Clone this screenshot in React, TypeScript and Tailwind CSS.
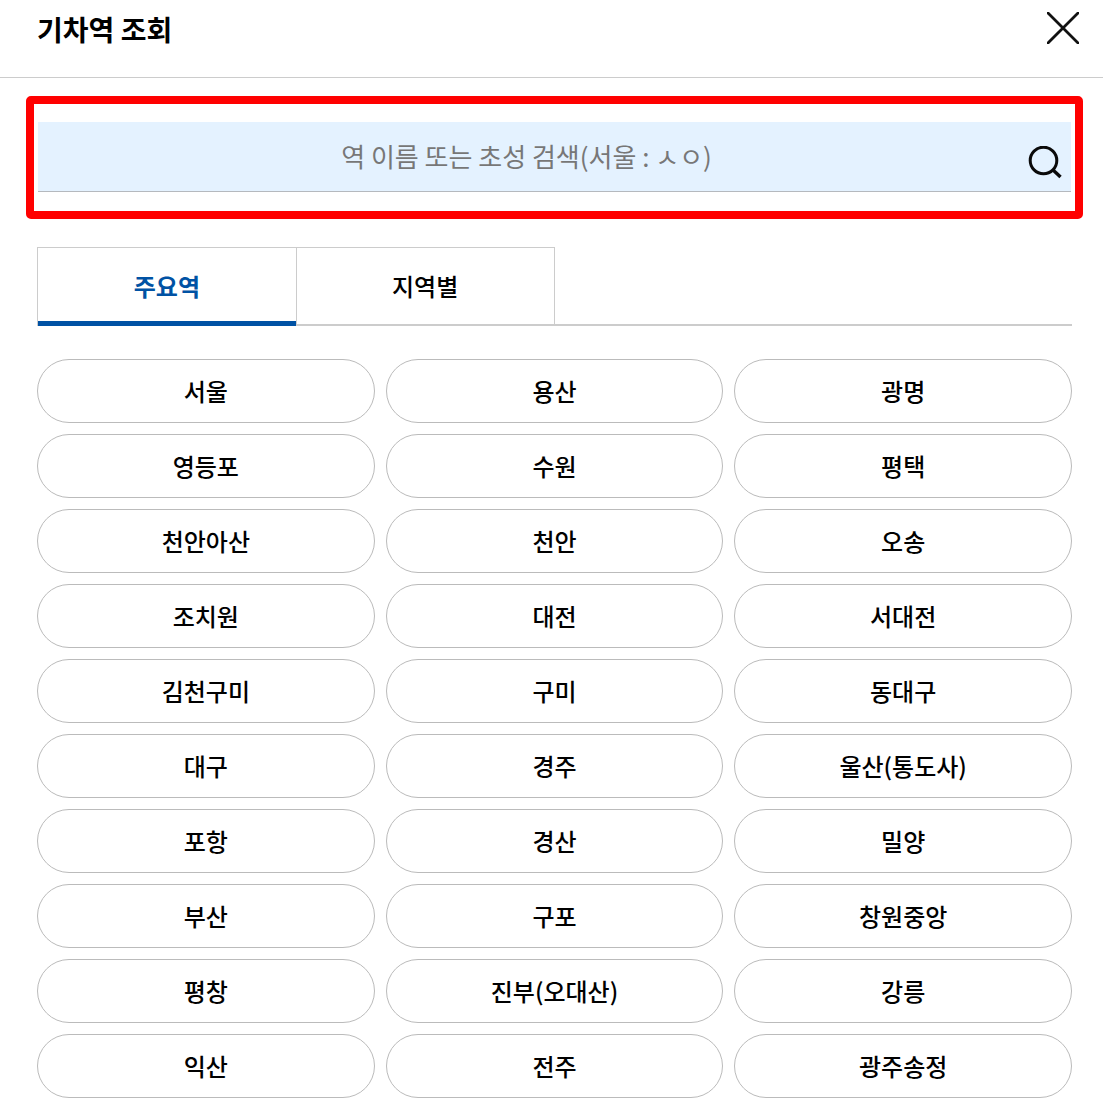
import { useState } from "react";

type Tab = "main" | "region";

const TABS: { id: Tab; label: string }[] = [
  { id: "main", label: "주요역" },
  { id: "region", label: "지역별" },
];

const STATIONS = [
  "서울", "용산", "광명",
  "영등포", "수원", "평택",
  "천안아산", "천안", "오송",
  "조치원", "대전", "서대전",
  "김천구미", "구미", "동대구",
  "대구", "경주", "울산(통도사)",
  "포항", "경산", "밀양",
  "부산", "구포", "창원중앙",
  "평창", "진부(오대산)", "강릉",
  "익산", "전주", "광주송정",
];

const CloseIcon = () => (
  <svg width="32" height="32" viewBox="0 0 32 32" fill="none" stroke="#111" strokeWidth="2.8" aria-hidden="true">
    <path d="M0 0L32 32M32 0L0 32" />
  </svg>
);

const SearchIcon = () => (
  <svg width="34" height="34" viewBox="0 0 34 34" fill="none" stroke="#0a0a0a" strokeWidth="3" aria-hidden="true">
    <circle cx="15.5" cy="14.5" r="13.3" />
    <path d="M24.5 23.5L32.5 31" strokeWidth="3.4" />
  </svg>
);

const App = () => {
  const [tab, setTab] = useState<Tab>("main");
  const [keyword, setKeyword] = useState("");

  return (
    <div className="min-h-screen bg-white pb-2 text-black font-['Noto_Sans_CJK_KR',sans-serif]">
      {/* Header */}
      <header className="flex items-start justify-between border-b border-[#ccc] pt-3 pr-6 pb-[29px] pl-[37px]">
        <h1 className="text-[28px] leading-[34px] font-bold">기차역 조회</h1>
        <button type="button" aria-label="닫기" className="h-9 pb-1">
          <CloseIcon />
        </button>
      </header>

      {/* Search */}
      <div className="mt-[18px] mr-5 ml-[26px] rounded-[5px] border-8 border-[#f00] px-1 pt-[18px] pb-[19px]">
        <form
          className="flex h-[70px] border-b border-[#b5b9be] bg-[#e4f2ff]"
          onSubmit={(e) => e.preventDefault()}
        >
          <input
            type="text"
            aria-label="역 검색"
            value={keyword}
            onChange={(e) => setKeyword(e.target.value)}
            placeholder="역 이름 또는 초성 검색(서울 : ㅅㅇ)"
            className="min-w-0 flex-1 pb-0.5 text-center text-[26px] outline-none placeholder:text-[#777]"
          />
          <button type="submit" aria-label="검색" className="flex w-14 items-center justify-end pt-3 pr-[9px]">
            <SearchIcon />
          </button>
        </form>
      </div>

      <main className="mt-7 pr-[31px] pl-[37px]">
        {/* Tabs */}
        <div role="tablist" className="flex h-[79px] shadow-[inset_0_-2px_#ccc]">
          {TABS.map((t) => (
            <button
              key={t.id}
              type="button"
              role="tab"
              aria-selected={tab === t.id}
              onClick={() => setTab(t.id)}
              className={`w-1/4 border-t border-l border-[#ccc] pb-0.5 text-2xl last:border-r ${
                tab === t.id ? "font-bold text-[#0052a4] shadow-[inset_0_-5px_#0052a4]" : "font-medium"
              }`}
            >
              {t.label}
            </button>
          ))}
        </div>

        {/* Stations */}
        <ul className="mt-[33px] grid grid-cols-3 gap-[11px]">
          {STATIONS.map((name) => (
            <li key={name}>
              <button
                type="button"
                className="h-16 w-full rounded-full border border-[#bbb] text-2xl font-medium"
              >
                {name}
              </button>
            </li>
          ))}
        </ul>
      </main>
    </div>
  );
};

export default App;
